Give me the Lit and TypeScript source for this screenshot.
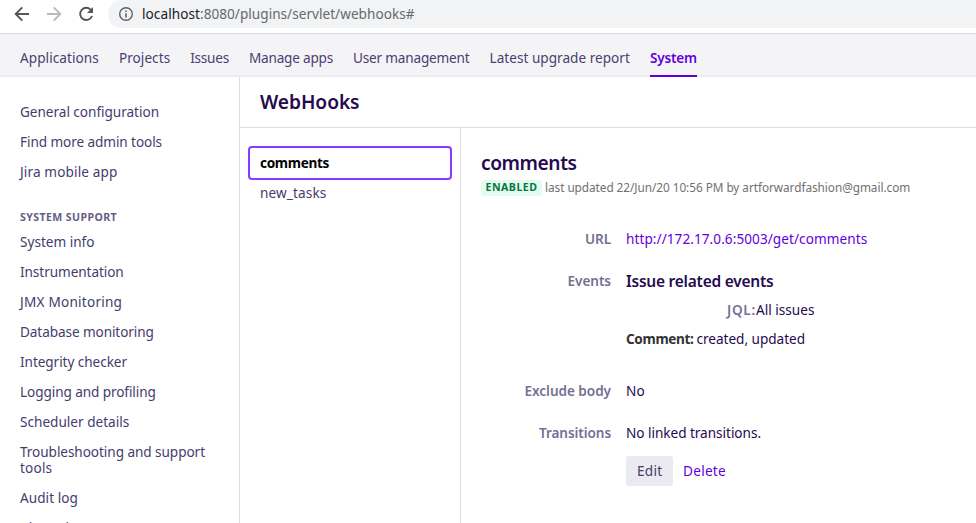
import { LitElement, html, css } from "lit";
import { customElement, property } from "lit/decorators.js";

/** A single line of text tracked so that it fills an exact measure. */
@customElement("text-run")
class TextRun extends LitElement {
  @property({ type: Number }) measure = 0;
  @property() text = "";

  static styles = css`
    :host { display: inline-block; white-space: pre; vertical-align: baseline; }
    .run { display: inline-block; }
  `;

  render() {
    return html`<span class="run">${this.text}</span>`;
  }

  updated() {
    const run = this.renderRoot.querySelector(".run") as HTMLElement;
    run.style.letterSpacing = "0px";
    const natural = run.getBoundingClientRect().width;
    run.style.letterSpacing = `${(this.measure - natural) / this.text.length}px`;
  }
}

type Item = [string, number];

const run = ([text, measure]: Item) => html`<text-run .text=${text} .measure=${measure}></text-run>`;

const tabs: Item[] = [
  ["Applications", 78.9],
  ["Projects", 51.3],
  ["Issues", 38.8],
  ["Manage apps", 84],
  ["User management", 116.5],
  ["Latest upgrade report", 140.4],
  ["System", 47],
];

const general: Item[][] = [
  [["General configuration", 139]],
  [["Find more admin tools", 142]],
  [["Jira mobile app", 97.5]],
];

const support: Item[][] = [
  [["System info", 74.5]],
  [["Instrumentation", 103.7]],
  [["JMX Monitoring", 102.2]],
  [["Database monitoring", 133.8]],
  [["Integrity checker", 107]],
  [["Logging and profiling", 135.8]],
  [["Scheduler details", 109.3]],
  [["Troubleshooting and support", 185], ["tools", 32.3]],
  [["Audit log", 58]],
  [["Clustering", 66]],
];

@customElement("app-root")
class AppRoot extends LitElement {
  static styles = css`
    :host {
      display: flex;
      flex-direction: column;
      height: 523px;
      overflow: hidden;
      background: #fff;
      color: #260a4f;
      font: 13.6px/16px "Noto Sans", "Open Sans", sans-serif;
    }
    * { box-sizing: border-box; }
    a { color: inherit; text-decoration: none; }
    .browser {
      flex: none;
      display: flex;
      height: 34px;
      border-bottom: 1px solid #d9d8e2;
    }
    .buttons { display: block; width: 108px; height: 28px; flex: none; }
    .address {
      flex: 1;
      height: 28px;
      display: flex;
      align-items: center;
      padding-left: 10px;
      border-radius: 14px 0 0 14px;
      background: #f1f3f4;
      color: #66696d;
    }
    .info { width: 16px; height: 16px; margin-right: 8px; }
    .host { color: #202124; }
    .tabs {
      flex: none;
      height: 43px;
      display: flex;
      gap: 20px;
      padding-left: 20px;
      background: #f4f4f7;
      border-bottom: 2px solid #ebebf0;
      color: #4a4070;
    }
    .tab { height: 43px; padding-top: 16px; }
    .tab.current { color: #6300e0; font-weight: 600; border-bottom: 2px solid #5c00d6; }
    .page { flex: 1; min-height: 0; display: flex; }
    .side {
      width: 240px;
      flex: none;
      padding: 27px 0 0 20px;
      border-right: 1px solid #dddce6;
      color: #463c6c;
      overflow: hidden;
    }
    .entry { display: flex; flex-direction: column; align-items: flex-start; margin-bottom: 14px; }
    .group { font-size: 10.6px; font-weight: 700; color: #655d86; margin: 29px 0 9px; }
    .main { flex: 1; display: flex; flex-direction: column; }
    .title {
      height: 51px;
      padding: 13px 0 0 20px;
      border-bottom: 1px solid #dddce6;
      font-size: 19.2px;
      line-height: 24px;
      font-weight: 600;
    }
    .split { flex: 1; display: flex; }
    .hooks { width: 221px; padding: 18px 8px 0; border-right: 1px solid #dddce6; color: #463c6c; }
    .hook { padding: 5px 12px; }
    .hook.selected {
      height: 34px;
      padding: 7px 10px;
      border: 2px solid #873bff;
      border-radius: 4px;
      color: #000;
      font-weight: 700;
    }
    .detail { flex: 1; padding: 23px 0 0 20px; }
    .name { font-size: 19.2px; line-height: 24px; font-weight: 600; }
    .meta { display: flex; align-items: flex-start; gap: 3px; margin-top: 5px; height: 16px; color: #707070; font-size: 11.8px; line-height: 14px; }
    .badge {
      width: 61px;
      height: 16px;
      text-align: center;
      border-radius: 3px;
      background: #e3fcef;
      color: #087443;
      font-size: 10.6px;
      font-weight: 700;
      line-height: 14px;
    }
    .fields { display: grid; grid-template-columns: 130px 1fr; column-gap: 15px; row-gap: 26px; margin-top: 35px; }
    .label { text-align: right; color: #756f94; font-weight: 600; }
    .link { color: #6300e0; }
    .events { font-size: 15.5px; font-weight: 600; }
    .jql { display: flex; padding-left: 101px; margin-top: 13px; }
    .jql .label { text-align: left; }
    .comment { display: flex; gap: 3px; margin: 13px 0 10px; }
    .strong { font-weight: 700; color: #333; }
    .actions { display: flex; align-items: center; margin: 15px 0 0 145px; }
    .edit {
      width: 47px;
      height: 30px;
      padding: 7px 0 0 11px;
      margin-right: 10px;
      border-radius: 3px;
      background: #eceaf1;
      color: #463c6c;
    }
  `;

  render() {
    const entry = (lines: Item[]) => html`<a class="entry">${lines.map(run)}</a>`;
    return html`
      <header class="browser">
        <svg class="buttons" viewBox="0 0 108 28" fill="none" stroke-width="1.9">
          <path stroke="#54565b" d="M29 14H16M22.3 7.4L15.7 14l6.6 6.6" />
          <path stroke="#b9babd" d="M47 14h13M53.7 7.4l6.6 6.6-6.6 6.6" />
          <path stroke="#54565b" d="M91.1 10.2A6.1 6.1 0 1 0 92 16" />
          <path fill="#54565b" d="M93 7v6h-6z" />
        </svg>
        <div class="address">
          <svg class="info" viewBox="0 0 16 16">
            <circle cx="8" cy="8" r="6.3" fill="none" stroke="#5f6368" stroke-width="1.4" />
            <path fill="#5f6368" d="M7.2 7.2h1.6v4.2H7.2zM7.2 4.5h1.6v1.6H7.2z" />
          </svg>
          <span class="host">${run(["localhost", 58])}</span>${run([":8080/plugins/servlet/webhooks#", 214.5])}
        </div>
      </header>
      <nav class="tabs">
        ${tabs.map((t) => html`<a class="tab ${t[0] === "System" ? "current" : ""}">${run(t)}</a>`)}
      </nav>
      <div class="page">
        <aside class="side">
          ${general.map(entry)}
          <div class="group">${run(["SYSTEM SUPPORT", 97])}</div>
          ${support.map(entry)}
        </aside>
        <main class="main">
          <div class="title">${run(["WebHooks", 99.5])}</div>
          <div class="split">
            <div class="hooks">
              <div class="hook selected">${run(["comments", 69])}</div>
              <div class="hook">${run(["new_tasks", 66.5])}</div>
            </div>
            <section class="detail">
              <div class="name">${run(["comments", 95.5])}</div>
              <div class="meta">
                <span class="badge">${run(["ENABLED", 52])}</span>
                ${run(["last updated 22/Jun/20 10:56 PM by artforwardfashion@gmail.com", 365.2])}
              </div>
              <div class="fields">
                <div class="label">${run(["URL", 26])}</div>
                <a class="link">${run(["http://172.17.0.6:5003/get/comments", 241.2])}</a>
                <div class="label">${run(["Events", 43.5])}</div>
                <div>
                  <div class="events">${run(["Issue related events", 147.5])}</div>
                  <div class="jql"><span class="label">${run(["JQL:", 29])}</span>${run(["All issues", 58.5])}</div>
                  <div class="comment"><span class="strong">${run(["Comment:", 67.5])}</span>${run(["created, updated", 108.5])}</div>
                </div>
                <div class="label">${run(["Exclude body", 86.5])}</div>
                <div>${run(["No", 19])}</div>
                <div class="label">${run(["Transitions", 72])}</div>
                <div>${run(["No linked transitions.", 135])}</div>
              </div>
              <div class="actions">
                <a class="edit">${run(["Edit", 25.5])}</a>
                <a class="link">${run(["Delete", 43])}</a>
              </div>
            </section>
          </div>
        </main>
      </div>
    `;
  }
}
